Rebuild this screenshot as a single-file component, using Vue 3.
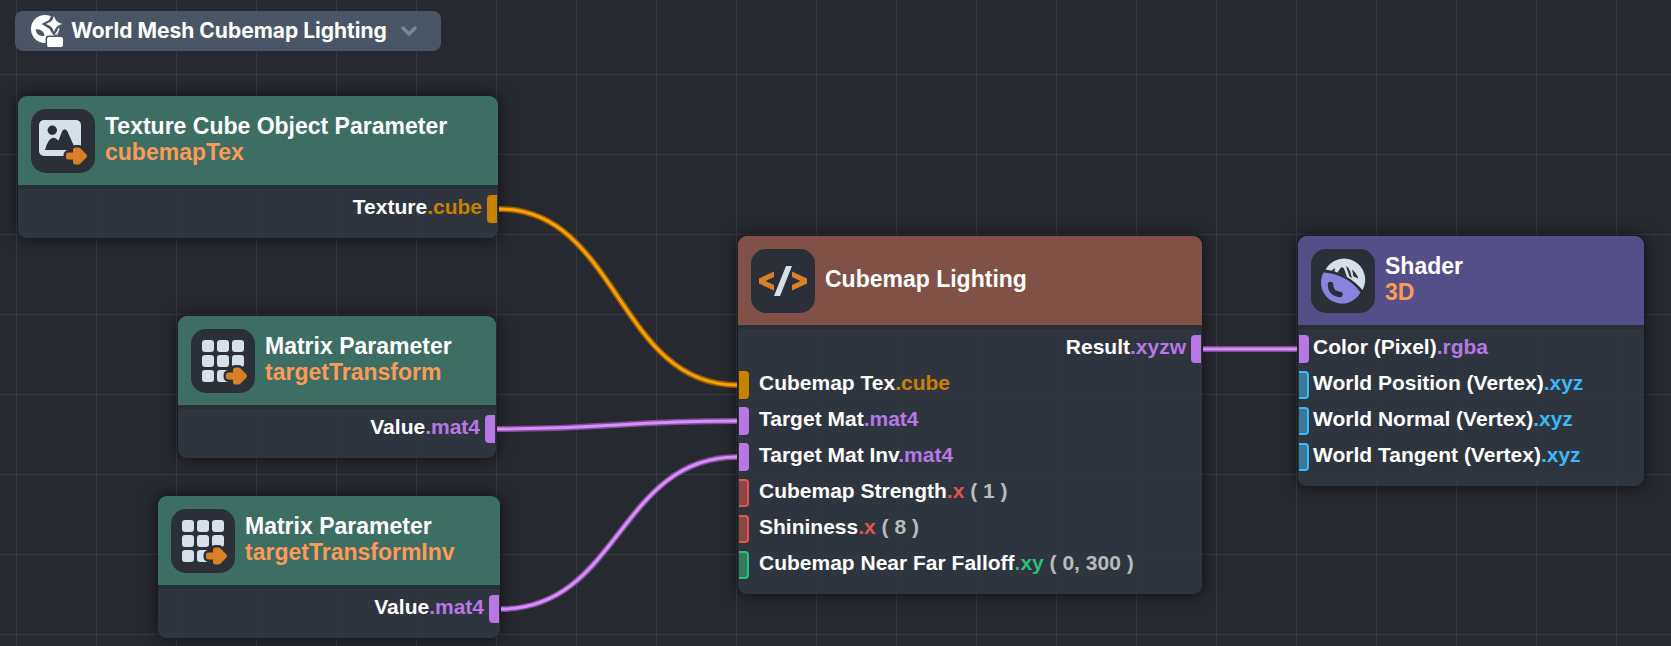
<script setup>
const nodes = [
  {
    id: 'cubemapTex', kind: 'parameter', icon: 'image', x: 18, y: 96, width: 480,
    title: 'Texture Cube Object Parameter', subtitle: 'cubemapTex',
    ports: [{ side: 'out', name: 'Texture', type: 'cube', tone: 'amber', linked: true }],
  },
  {
    id: 'targetTransform', kind: 'parameter', icon: 'matrix', x: 178, y: 316, width: 318,
    title: 'Matrix Parameter', subtitle: 'targetTransform',
    ports: [{ side: 'out', name: 'Value', type: 'mat4', tone: 'violet', linked: true }],
  },
  {
    id: 'targetTransformInv', kind: 'parameter', icon: 'matrix', x: 158, y: 496, width: 342,
    title: 'Matrix Parameter', subtitle: 'targetTransformInv',
    ports: [{ side: 'out', name: 'Value', type: 'mat4', tone: 'violet', linked: true }],
  },
  {
    id: 'lighting', kind: 'code', icon: 'code', x: 738, y: 236, width: 464,
    title: 'Cubemap Lighting',
    ports: [
      { side: 'out', name: 'Result', type: 'xyzw', tone: 'violet', linked: true },
      { side: 'in', name: 'Cubemap Tex', type: 'cube', tone: 'amber', linked: true },
      { side: 'in', name: 'Target Mat', type: 'mat4', tone: 'violet', linked: true },
      { side: 'in', name: 'Target Mat Inv', type: 'mat4', tone: 'violet', linked: true },
      { side: 'in', name: 'Cubemap Strength', type: 'x', tone: 'red', value: '( 1 )' },
      { side: 'in', name: 'Shininess', type: 'x', tone: 'red', value: '( 8 )' },
      { side: 'in', name: 'Cubemap Near Far Falloff', type: 'xy', tone: 'green', value: '( 0, 300 )' },
    ],
  },
  {
    id: 'shader', kind: 'output', icon: 'sphere', x: 1298, y: 236, width: 346,
    title: 'Shader', subtitle: '3D',
    ports: [
      { side: 'in', name: 'Color (Pixel)', type: 'rgba', tone: 'violet', linked: true },
      { side: 'in', name: 'World Position (Vertex)', type: 'xyz', tone: 'blue' },
      { side: 'in', name: 'World Normal (Vertex)', type: 'xyz', tone: 'blue' },
      { side: 'in', name: 'World Tangent (Vertex)', type: 'xyz', tone: 'blue' },
    ],
  },
]

const links = [
  { from: ['cubemapTex', 0], to: ['lighting', 1], tone: 'amber' },
  { from: ['targetTransform', 0], to: ['lighting', 2], tone: 'violet' },
  { from: ['targetTransformInv', 0], to: ['lighting', 3], tone: 'violet' },
  { from: ['lighting', 0], to: ['shader', 0], tone: 'violet' },
]

const FIRST_PORT = 113
const PORT_PITCH = 36

function wire({ from, to }) {
  const a = nodes.find((n) => n.id === from[0])
  const b = nodes.find((n) => n.id === to[0])
  const x1 = a.x + a.width + 1
  const y1 = a.y + FIRST_PORT + from[1] * PORT_PITCH
  const x2 = b.x - 1
  const y2 = b.y + FIRST_PORT + to[1] * PORT_PITCH
  const mid = (x1 + x2) / 2
  return `M${x1} ${y1} C${mid} ${y1} ${mid} ${y2} ${x2} ${y2}`
}
</script>

<template>
  <main class="canvas">
    <button class="graph-picker" type="button">
      <svg class="graph-icon" viewBox="0 0 32 32" aria-hidden="true">
        <circle cx="14" cy="14" r="14" fill="#fff" />
        <path d="M20 1L18 5 10.500 9l7.500 4.500 4 6 3 2L33 9z" fill="#4a5565" />
        <path d="M15 9L20 6.500 19.500 11z" fill="#fff" />
        <path d="M23 1q1.500 6.500 8.500 8q-7 1.500-8.500 8q-1.500-6-7.500-8q6-1.500 7.500-8z" fill="#fff" />
        <path d="M24.500 19.500q2.500-2.500 3.500-6" fill="none" stroke="#fff" stroke-width="1.500" />
        <path d="M4.500 14.500q4-1 6.500 1.500q2.500 1.500 2.500 5h-2q-6-.5-7-6.500z" fill="#4a5565" />
        <rect x="14.500" y="20.500" width="19" height="13" rx="3" fill="#4a5565" />
        <rect x="16" y="22" width="16" height="10" rx="2" fill="#fff" />
      </svg>
      <span>World Mesh Cubemap Lighting</span>
      <svg class="chevron" viewBox="0 0 16 10" aria-hidden="true">
        <path d="M2 2l6 6 6-6" fill="none" stroke="#7d8896" stroke-width="3.500" stroke-linecap="round" stroke-linejoin="round" />
      </svg>
    </button>

    <article
      v-for="node in nodes"
      :key="node.id"
      class="node"
      :class="node.kind"
      :style="{ left: node.x + 'px', top: node.y + 'px', width: node.width + 'px' }"
    >
      <header class="node-head">
        <svg class="node-icon" viewBox="0 0 64 64" aria-hidden="true">
          <template v-if="node.icon === 'image'">
            <rect x="8" y="11" width="42" height="36" rx="5" fill="#d6e0ea" />
            <circle cx="21.300" cy="21.300" r="4.700" fill="#2b3038" />
            <path d="M14 41q1.500-6 4-9.500q3.500-4.500 7.500-1.500l2 1.500 3.500-9q2.500-4.500 5.500 0L42.500 36v5z" fill="#2b3038" />
          </template>
          <template v-else-if="node.icon === 'matrix'">
            <template v-for="row in 3" :key="row">
              <rect v-for="col in 3" :key="col" :x="col * 15 - 4" :y="row * 15 - 4" width="12" height="12" rx="3" fill="#d6e0ea" />
            </template>
          </template>
          <template v-else-if="node.icon === 'code'">
            <path d="M8 29.500L23 22.500v5.500L14.500 32 23 36v5.500L8 34.500zM56 29.500L41 22.500v5.500L49.500 32 41 36v5.500L56 34.500z" fill="#d98026" />
            <path d="M35 17h6L29 47h-6z" fill="#d6e0ea" />
          </template>
          <template v-else>
            <path d="M14.500 20.500A21 21 0 0 1 51.500 41Q37 24 14.500 20.500z" fill="#d6e0ea" />
            <path d="M20.500 21.500l3.500-2.500-.5 4zM26.500 23.500l3-4.500q1.500-1.500 3 0l1 2 2.500 7zM35 17q2.500 1 4 5l2 7-2.500-1.500-2-6zM41 20.500q4 3 6.500 9l-5-2z" fill="#2b3038" />
            <path d="M12.500 23.500C25 24 40 30 49.500 43.500A21 21 0 1 1 12.500 23.500z" fill="#8b82df" />
            <path d="M19.500 35.500c0 6 3.500 9.500 9.500 10" fill="none" stroke="#2b3038" stroke-width="5.500" stroke-linecap="round" />
          </template>
          <g v-if="node.kind === 'parameter'" stroke-linejoin="round">
            <path class="arrow-halo" d="M37.500 46h7v-5h3l6 6-6 6h-3v-5h-7z" />
            <path class="arrow" d="M37.500 46h7v-5h3l6 6-6 6h-3v-5h-7z" />
          </g>
        </svg>
        <div class="node-name">
          <h2>{{ node.title }}</h2>
          <p v-if="node.subtitle">{{ node.subtitle }}</p>
        </div>
      </header>
      <ul class="ports">
        <li v-for="port in node.ports" :key="port.name" class="port" :class="[port.side, port.tone]">
          <span class="socket" :class="{ linked: port.linked }"></span>
          <span class="label">{{ port.name }}<span class="type">.{{ port.type }}</span><span v-if="port.value" class="value">&nbsp;{{ port.value }}</span></span>
        </li>
      </ul>
    </article>

    <svg class="wires" aria-hidden="true">
      <g v-for="(link, i) in links" :key="i" :class="link.tone">
        <path class="wire-edge" :d="wire(link)" />
        <path class="wire-core" :d="wire(link)" />
      </g>
    </svg>
  </main>
</template>

<style>
body {
  margin: 0;
  background: #272930;
}
</style>

<style scoped>
.canvas {
  position: relative;
  box-sizing: border-box;
  min-height: 100vh;
  padding: 11px 15px;
  overflow: hidden;
  background-color: #272930;
  background-image:
    linear-gradient(to right, #373a42 1px, transparent 1px),
    linear-gradient(to bottom, #373a42 1px, transparent 1px);
  background-size: 80px 80px;
  background-position: 16px 74px;
  font-family: "Liberation Sans", Arial, sans-serif;
  font-weight: 700;
  color: #fff;
}

.graph-picker {
  display: flex;
  align-items: center;
  height: 40px;
  padding: 0 24px 0 16px;
  border: 0;
  border-radius: 8px;
  background: #4a5565;
  color: #fff;
  font: 700 21px/24px Inter, sans-serif;
}

.graph-icon {
  width: 32px;
  height: 32px;
  margin-right: 8px;
}

.chevron {
  width: 16px;
  height: 10px;
  margin-left: 14px;
}

.node {
  position: absolute;
  border-radius: 9px;
  overflow: hidden;
  background: #30363ef5;
  box-shadow: 0 0 16px rgba(0, 0, 0, 0.65);
}

.wires {
  position: absolute;
  inset: 0;
  width: 100%;
  height: 100%;
  pointer-events: none;
}

.node-head {
  display: flex;
  align-items: center;
  gap: 10px;
  height: 89px;
  padding: 0 13px;
  box-sizing: border-box;
}

.parameter .node-head { background: #3c6e64; }
.code .node-head { background: #815046; }
.output .node-head { background: #544f89; }

.node-icon {
  flex: none;
  width: 64px;
  height: 64px;
  border-radius: 15px;
  background: #2b3038;
}

.arrow-halo {
  fill: #2b3038;
  stroke: #2b3038;
  stroke-width: 10px;
}

.arrow {
  fill: #d98026;
  stroke: #d98026;
  stroke-width: 5px;
}

.node-name {
  padding-bottom: 4px;
}

.node-name h2,
.node-name p {
  margin: 0;
  font-size: 23px;
  font-weight: 700;
  line-height: 26px;
  white-space: nowrap;
}

.node-name p {
  color: #fe9a57;
}

.ports {
  display: flex;
  flex-direction: column;
  gap: 8px;
  margin: 0;
  padding: 6px 1px 15px;
  border-top: 4px solid #2a2e36;
  list-style: none;
}

.port {
  display: flex;
  height: 28px;
  font-size: 21px;
  line-height: 24px;
  white-space: nowrap;
}

.socket {
  box-sizing: border-box;
  width: 10px;
  height: 28px;
  border: 2px solid var(--tone);
  background: var(--fill);
}

.socket.linked { background: var(--tone); }

.in { gap: 10px; }
.output .in { gap: 4px; }
.in .socket {
  border-left: 0;
  border-radius: 0 4px 4px 0;
}

.out {
  flex-direction: row-reverse;
  gap: 5px;
}
.out .socket {
  border-right: 0;
  border-radius: 4px 0 0 4px;
}

.amber { --tone: #c98100; --wire: #ffa000; --edge: #b87500; }
.violet { --tone: #b877e6; --wire: #dc8cff; --edge: #9a62b5; }
.red { --tone: #df564b; --fill: #8a4745; }
.green { --tone: #29bf79; --fill: #2e7c5b; }
.blue { --tone: #3db8fa; --fill: #387a9b; }

.type { color: var(--tone); }
.value { color: #b9bbbe; }

.wire-edge,
.wire-core {
  fill: none;
}
.wire-edge {
  stroke: var(--edge);
  stroke-width: 6px;
  opacity: 0.75;
}
.wire-core {
  stroke: var(--wire);
  stroke-width: 3px;
}
</style>
